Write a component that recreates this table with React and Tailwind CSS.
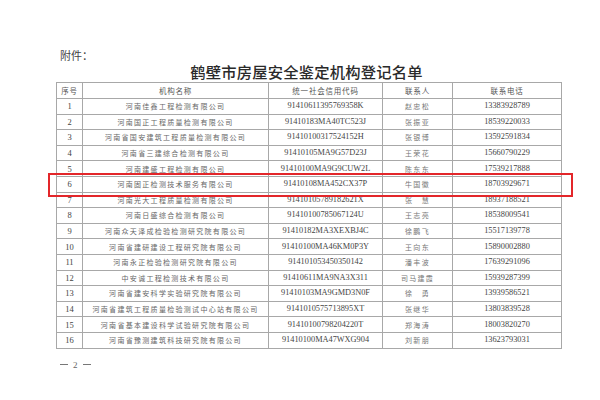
const rows = [
  ["1", "河南佳鑫工程检测有限公司", "91410611395769358K", "赵忠松", "13383928789"],
  ["2", "河南国正工程质量检测有限公司", "91410183MA40TC523J", "张振亚", "18539220033"],
  ["3", "河南省国安建筑工程质量检测有限公司", "91410100317524152H", "张银博", "13592591834"],
  ["4", "河南省三建综合检测有限公司", "91410105MA9G57D23J", "王荣花", "15660790229"],
  ["5", "河南建盛工程检测有限公司", "91410100MA9G9CUW2L", "陈东东", "17539217888"],
  ["6", "河南固正检测技术服务有限公司", "91410108MA452CX37P", "牛国徽", "18703929671"],
  ["7", "河南光大工程质量检测有限公司", "91410105789182621X", "张　慧", "18937188521"],
  ["8", "河南日盛综合检测有限公司", "91410100785067124U", "王志亮", "18538009541"],
  ["9", "河南众天泽成检验检测研究院有限公司", "91410182MA3XEXBJ4C", "徐鹏飞", "15517139778"],
  ["10", "河南省建研建设工程研究院有限公司", "91410100MA46KM0P3Y", "王向东", "15890002880"],
  ["11", "河南永正检验检测研究院有限公司", "914101053450350142", "潘丰波", "17639291096"],
  ["12", "中安诚工程检测技术有限公司", "91410611MA9NA3X311", "司马建霞", "15939287399"],
  ["13", "河南省建安科学实验研究院有限公司", "91410103MA9GMD3N0F", "徐　勇", "13939586521"],
  ["14", "河南省建筑工程质量检验测试中心站有限公司", "9141010575713895XT", "张继华", "13803839528"],
  ["15", "河南省基本建设科学试验研究院有限公司", "91410100798204220T", "郑海涛", "18003820270"],
  ["16", "河南省豫测建筑科技研究院有限公司", "91410100MA47WXG904", "刘新朋", "13623793031"],
];

const cjk = "font-['Noto_Sans_CJK_SC',sans-serif]";
const num = "font-['Liberation_Serif','Noto_Sans_CJK_SC',serif]";

export default function App() {
  return (
    <div className="relative w-[600px] h-[400px] bg-white overflow-hidden text-[#555]">
      {/* 附件 */}
      <div className={`pl-[60px] pt-[48px] text-[11px] leading-[14px] text-[#444] ${cjk}`}>附件：</div>

      <div className="ml-[54px] w-[505px] mt-[2px] text-center text-[15.3px] leading-[17px] text-[#2a2a2a] font-['Liberation_Serif','Noto_Sans_CJK_SC',serif] font-medium tracking-[0.2px]">
        鹤壁市房屋安全鉴定机构登记名单
      </div>

      <table className="ml-[56px] mt-[1px] border-collapse table-fixed w-[505px]">
        <colgroup>
          <col className="w-[26px]" />
          <col className="w-[186px]" />
          <col className="w-[114px]" />
          <col className="w-[70px]" />
          <col className="w-[109px]" />
        </colgroup>
        <thead>
          <tr className="h-[16px]">
            {["序号", "机构名称", "统一社会信用代码", "联系人", "联系电话"].map((h) => (
              <th
                key={h}
                className={`border border-[#a8a8a8] p-0 text-center font-normal text-[7.5px] leading-[15px] tracking-[0.8px] text-[#555] ${cjk}`}
              >
                {h}
              </th>
            ))}
          </tr>
        </thead>
        <tbody>
          {rows.map((r) => (
            <tr key={r[0]} className="h-[15.6px]">
              <td className={`border border-[#a8a8a8] p-0 text-center text-[8.5px] leading-[14px] text-[#444] ${num}`}>{r[0]}</td>
              <td className={`border border-[#a8a8a8] p-0 text-center text-[7px] leading-[14px] tracking-[1.3px] text-[#666] whitespace-nowrap ${cjk}`}>{r[1]}</td>
              <td className={`border border-[#a8a8a8] p-0 text-center text-[8.3px] leading-[14px] text-[#444] ${num}`}>{r[2]}</td>
              <td className={`border border-[#a8a8a8] p-0 text-center text-[7px] leading-[14px] tracking-[1.3px] text-[#777] ${cjk}`}>{r[3]}</td>
              <td className={`border border-[#a8a8a8] p-0 text-center text-[8.3px] leading-[14px] text-[#444] ${num}`}>{r[4]}</td>
            </tr>
          ))}
        </tbody>
      </table>

      {/* page number */}
      <div className={`pl-[60px] mt-[10px] flex items-center gap-[5px] text-[9px] leading-[12px] text-[#666] ${num}`}>
        <span className="w-[8px] h-px bg-[#777]" />
        <span>2</span>
        <span className="w-[8px] h-px bg-[#777]" />
      </div>

      {/* highlight box */}
      <div className="absolute left-[48px] top-[173px] w-[525px] h-[24px] border-2 border-[#e3262a]" />
    </div>
  );
}
